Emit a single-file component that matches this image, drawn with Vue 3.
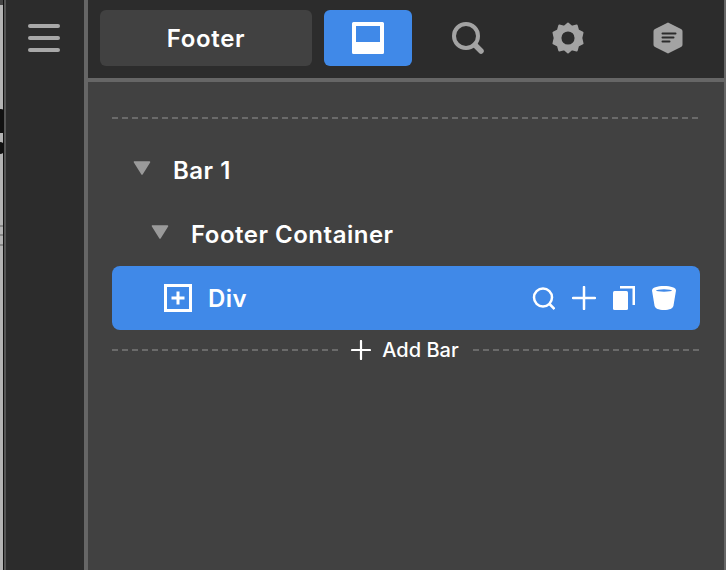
<script setup>
const treeRows = [
  { label: 'Bar 1', cls: 'level-one' },
  { label: 'Footer Container', cls: 'level-two' },
]
</script>

<template>
  <div class="app">
    <div class="edge">
      <i class="blot blot-top"></i>
      <i class="blot blot-a"></i>
      <i class="blot blot-b"></i>
      <i class="tick tick-a"></i>
      <i class="tick tick-b"></i>
      <i class="tick tick-c"></i>
    </div>
    <aside class="rail">
      <div class="burger"><span></span><span></span><span></span></div>
    </aside>
    <main class="panel">
      <header class="topbar">
        <div class="title">Footer</div>
        <button class="tab active">
          <svg width="32" height="32" viewBox="0 0 32 32">
            <path fill="#fff" fill-rule="evenodd" d="M1.500 0h29A1.500 1.500 0 0 1 32 1.500v29a1.500 1.500 0 0 1-1.500 1.500h-29A1.500 1.500 0 0 1 0 30.500v-29A1.500 1.500 0 0 1 1.500 0zM4 4v16h24V4z" />
          </svg>
        </button>
        <button class="tab">
          <svg width="34" height="34" viewBox="0 0 34 34">
            <circle cx="15" cy="15" r="12" fill="none" stroke="#a3a3a3" stroke-width="4" />
            <path d="M24 24l6 6" stroke="#a3a3a3" stroke-width="5.500" stroke-linecap="round" />
          </svg>
        </button>
        <button class="tab">
          <svg width="32" height="32" viewBox="0 0 34 34">
            <path fill="#a3a3a3" stroke="#a3a3a3" stroke-width="2" stroke-linejoin="round" d="M17 1.500l4 3.500 5.300-1.300 1.500 5.300 4.700 2.200-1.300 5.800 1.300 5.800-4.700 2.200-1.500 5.300-5.300-1.300-4 3.500-4-3.500-5.300 1.300-1.500-5.300-4.700-2.200 1.300-5.800-1.300-5.800L6.200 9l1.500-5.300L13 5z" />
            <circle cx="17" cy="17" r="7" fill="#2c2c2c" />
          </svg>
        </button>
        <button class="tab">
          <svg width="32" height="34" viewBox="0 0 32 34">
            <path fill="#a3a3a3" d="M16 1.500l13 6.600c1 .5 1.500 1.300 1.500 2.400v13c0 1.100-.5 1.900-1.500 2.400L16 32.500 3 25.900C2 25.400 1.500 24.600 1.500 23.500v-13c0-1.100.5-1.900 1.500-2.400z" />
            <path d="M10.500 12.500h13M10.500 16.500h11M10.500 20.500h7" stroke="#2c2c2c" stroke-width="2" stroke-linecap="round" />
          </svg>
        </button>
      </header>
      <section class="content">
        <div class="dash top-dash"></div>
        <div v-for="row in treeRows" :key="row.label" class="tree-row" :class="row.cls">
          <svg class="caret" width="18" height="14" viewBox="0 0 18 14">
            <path d="M1.500 1h15L9 13z" fill="#9a9a9a" stroke="#9a9a9a" stroke-width="1.500" stroke-linejoin="round" />
          </svg>
          <span class="tree-label">{{ row.label }}</span>
        </div>
        <div class="selected">
          <svg class="div-icon" width="28" height="28" viewBox="0 0 28 28">
            <rect x="1.500" y="1.500" width="25" height="25" fill="none" stroke="#fff" stroke-width="3" />
            <path d="M14 7.500v13M7.500 14h13" stroke="#fff" stroke-width="3" />
          </svg>
          <span class="selected-label">Div</span>
          <div class="actions">
            <svg width="24" height="24" viewBox="0 0 24 24">
              <circle cx="12" cy="11.500" r="9" fill="none" stroke="#fff" stroke-width="2.500" />
              <path d="M18.500 18l5 5" stroke="#fff" stroke-width="2.500" />
            </svg>
            <svg width="24" height="24" viewBox="0 0 24 24">
              <path d="M12 1v22M1 12h22" stroke="#fff" stroke-width="2.500" stroke-linecap="round" />
            </svg>
            <svg width="22" height="24" viewBox="0 0 22 24">
              <rect x="0" y="5" width="15" height="19" rx="1.500" fill="#fff" />
              <path d="M7 1.250h13.750V19" fill="none" stroke="#fff" stroke-width="2.500" />
            </svg>
            <svg width="24" height="24" viewBox="0 0 24 24">
              <path fill="#fff" d="M0 4.500C0 1.500 5 0 12 0s12 1.500 12 4.500l-2.500 15c-.5 3-4 4.500-9.500 4.500s-9-1.500-9.500-4.500z" />
              <ellipse cx="12" cy="4.500" rx="8" ry="1.200" fill="#4089e8" />
            </svg>
          </div>
        </div>
        <div class="add-bar">
          <span class="dash flex-dash"></span>
          <svg width="20" height="20" viewBox="0 0 20 20">
            <path d="M10 1v18M1 10h18" stroke="#fff" stroke-width="2.200" stroke-linecap="round" />
          </svg>
          <span class="add-label">Add Bar</span>
          <span class="dash flex-dash"></span>
        </div>
      </section>
    </main>
  </div>
</template>

<style>
html, body { margin: 0; background: #414141; overflow: hidden; }
</style>

<style scoped>
.app {
  display: flex;
  width: 726px;
  height: 570px;
  overflow: hidden;
  font-family: Inter, "Liberation Sans", sans-serif;
  color: #fff;
  background: #414141;
}
.edge {
  position: relative;
  box-sizing: border-box;
  width: 6px;
  flex: none;
  background: #b4b4b4;
  border-right: 2px solid #555;
}
.edge::after {
  content: "";
  position: absolute;
  top: 0;
  bottom: 0;
  right: 0;
  width: 1px;
  background: #111;
}
.blot { position: absolute; left: 0; width: 4px; background: #111; }
.blot-top { top: 0; height: 5px; background: #444; }
.blot-a { top: 109px; height: 24px; border-radius: 0 3px 0 0; }
.blot-b { top: 142px; height: 12px; border-radius: 0 5px 5px 0; }
.tick { position: absolute; left: 0; width: 3px; height: 2px; background: #888; }
.tick-a { top: 225px; }
.tick-b { top: 234px; }
.tick-c { top: 244px; }
.rail {
  box-sizing: border-box;
  width: 82px;
  flex: none;
  background: #2c2c2c;
  border-right: 4px solid #666;
  display: flex;
  justify-content: center;
  padding-top: 24px;
}
.burger { display: flex; flex-direction: column; gap: 8px; width: 32px; margin-left: -2px; }
.burger span { height: 4px; border-radius: 2px; background: #a8a8a8; }
.panel {
  flex: 1;
  min-width: 0;
  display: flex;
  flex-direction: column;
  box-sizing: border-box;
  border-right: 2px solid #666;
}
.topbar {
  box-sizing: border-box;
  height: 82px;
  flex: none;
  display: flex;
  align-items: flex-start;
  padding: 10px 0 0 12px;
  background: #2c2c2c;
  border-bottom: 4px solid #666;
}
.title {
  width: 212px;
  height: 56px;
  margin-right: 12px;
  border-radius: 6px;
  background: #414141;
  font-size: 24px;
  font-weight: 600;
  line-height: 58px;
  letter-spacing: .7px;
  text-align: center;
}
.tab {
  width: 88px;
  height: 56px;
  padding: 0;
  margin-right: 12px;
  border: 0;
  border-radius: 6px;
  background: transparent;
  display: flex;
  align-items: center;
  justify-content: center;
}
.tab.active { background: #4089e8; }
.content { flex: 1; padding: 35px 24px 0; }
.dash {
  height: 2px;
  background: repeating-linear-gradient(90deg, #6a6a6a 0 6px, transparent 6px 10px);
}
.top-dash { margin-bottom: 19px; }
.tree-row { height: 64px; display: flex; align-items: center; }
.level-one { padding-left: 21px; }
.level-two { padding-left: 39px; }
.caret {
  flex: none;
  margin-right: 22px;
  margin-top: -4px;
}
.tree-label { font-size: 24px; font-weight: 600; letter-spacing: .5px; }
.selected {
  height: 64px;
  display: flex;
  align-items: center;
  padding: 0 24px 0 52px;
  border-radius: 8px;
  background: #4089e8;
}
.selected-label { margin-left: 16px; font-size: 24px; font-weight: 600; letter-spacing: .5px; }
.actions { margin-left: auto; display: flex; align-items: center; gap: 17px; }
.add-bar { height: 40px; display: flex; align-items: center; }
.flex-dash { flex: 1; }
.add-bar svg { margin: 0 11px 0 12px; }
.add-label { margin-right: 14px; font-size: 20px; font-weight: 500; }
</style>
